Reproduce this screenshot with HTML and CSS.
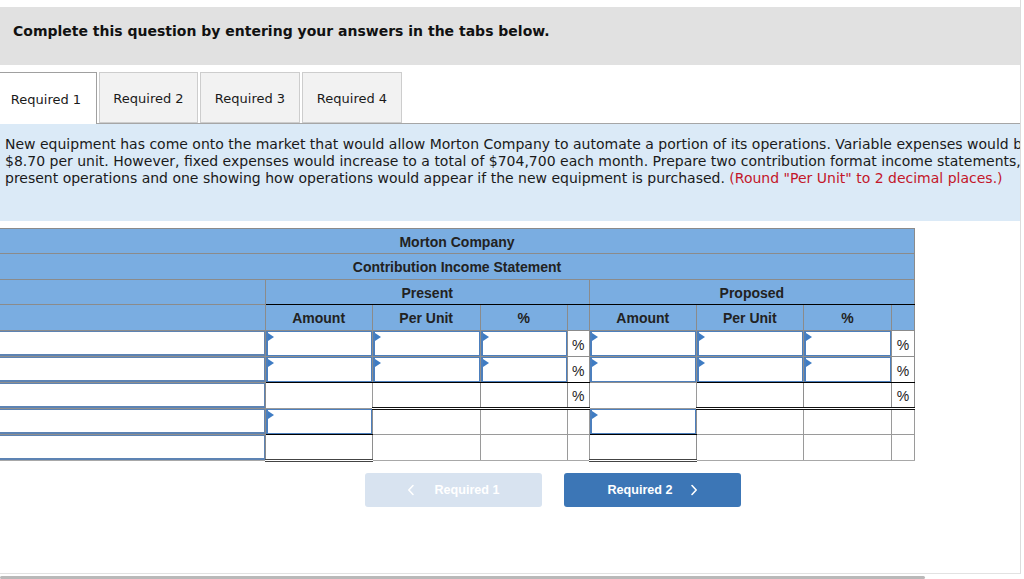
FILE: index.html
```html
<!DOCTYPE html>
<html lang="en">
<head>
<meta charset="utf-8">
<title>Required 1</title>
<link rel="stylesheet" href="styles.css">
</head>
<body>
<div class="page">
  <div class="banner">Complete this question by entering your answers in the tabs below.</div>

  <div class="tabs">
    <div class="tab active">Required 1</div>
    <div class="tab">Required 2</div>
    <div class="tab">Required 3</div>
    <div class="tab">Required 4</div>
  </div>

  <div class="prompt">
    <p>New equipment has come onto the market that would allow Morton Company to automate a portion of its operations. Variable expenses would be reduced by<br>$8.70 per unit. However, fixed expenses would increase to a total of $704,700 each month. Prepare two contribution format income statements, one showing<br>present operations and one showing how operations would appear if the new equipment is purchased. <span class="red">(Round "Per Unit" to 2 decimal places.)</span></p>
  </div>

  <table class="stmt">
    <colgroup>
      <col class="c-label"><col class="c-amt"><col class="c-pu"><col class="c-pct"><col class="c-sm">
      <col class="c-amt"><col class="c-pu2"><col class="c-pct2"><col class="c-sm2">
    </colgroup>
    <thead>
      <tr class="h1"><th colspan="9" class="title">Morton Company</th></tr>
      <tr class="h2"><th colspan="9" class="title">Contribution Income Statement</th></tr>
      <tr class="h3"><th class="lab"></th><th colspan="4" class="grp">Present</th><th colspan="4" class="grp">Proposed</th></tr>
      <tr class="h4"><th class="lab"></th><th>Amount</th><th>Per Unit</th><th>%</th><th></th><th>Amount</th><th>Per Unit</th><th>%</th><th></th></tr>
    </thead>
    <tbody>
      <tr>
        <td class="lab"><div class="lbl"></div></td>
        <td><div class="inp"></div></td><td><div class="inp"></div></td><td><div class="inp"></div></td><td class="pc">%</td>
        <td><div class="inp"></div></td><td><div class="inp"></div></td><td><div class="inp"></div></td><td class="pc">%</td>
      </tr>
      <tr class="r2">
        <td class="lab"><div class="lbl"></div></td>
        <td class="bk"><div class="inp"></div></td><td class="bk"><div class="inp"></div></td><td class="bk"><div class="inp"></div></td><td class="pc bk">%</td>
        <td><div class="inp"></div></td><td class="bk"><div class="inp"></div></td><td class="bk"><div class="inp"></div></td><td class="pc bk">%</td>
      </tr>
      <tr class="r3">
        <td class="lab"><div class="lbl"></div></td>
        <td class="plain"></td><td class="dbl"></td><td class="dbl"></td><td class="pc dbl">%</td>
        <td class="plain"></td><td class="dbl"></td><td class="dbl"></td><td class="pc dbl">%</td>
      </tr>
      <tr class="r4">
        <td class="lab"><div class="lbl"></div></td>
        <td class="bk"><div class="inp"></div></td><td class="plain"></td><td class="plain"></td><td class="plain"></td>
        <td class="bk"><div class="inp"></div></td><td class="plain"></td><td class="plain"></td><td class="plain"></td>
      </tr>
      <tr class="r5">
        <td class="lab"><div class="lbl"></div></td>
        <td class="tot"></td><td class="plain"></td><td class="plain"></td><td class="plain"></td>
        <td class="tot"></td><td class="plain"></td><td class="plain"></td><td class="plain"></td>
      </tr>
    </tbody>
  </table>

  <div class="nav">
    <button class="btn prev" type="button">
      <svg class="chev" width="8" height="12" viewBox="0 0 8 12"><path d="M6 1.5 L1.8 6 L6 10.5" fill="none" stroke="#fff" stroke-width="1.6" stroke-linecap="round" stroke-linejoin="round"/></svg>
      <span>Required 1</span>
    </button>
    <button class="btn next" type="button">
      <span>Required 2</span>
      <svg class="chev" width="8" height="12" viewBox="0 0 8 12"><path d="M2 1.5 L6.2 6 L2 10.5" fill="none" stroke="#fff" stroke-width="1.6" stroke-linecap="round" stroke-linejoin="round"/></svg>
    </button>
  </div>
</div>
<div class="hscroll"></div>
</body>
</html>
```

FILE: styles.css
```css
html, body {
  margin: 0;
  padding: 0;
  background: #ffffff;
}

.page {
  width: 1020px;
  height: 573px;
  border-right: 1px solid #dcdcdc;
  border-bottom: 1px solid #e2e2e2;
  overflow: hidden;
  font-family: "DejaVu Sans", Verdana, sans-serif;
  color: #1a1a1a;
}

.banner {
  margin-top: 7px;
  height: 58px;
  box-sizing: border-box;
  padding: 15px 13px 0;
  background: #e1e1e1;
  font-size: 14px;
  font-weight: bold;
  line-height: 18px;
  color: #111;
}

.tabs {
  margin-top: 7px;
  display: flex;
  height: 51px;
  border-bottom: 1px solid #a6a6a6;
}

.tab {
  display: flex;
  align-items: center;
  justify-content: center;
  box-sizing: border-box;
  height: 51px;
  width: 100px;
  margin-left: 2px;
  padding-top: 1px;
  background: #f2f2f2;
  border: 1px solid #cdcdcd;
  font-size: 13px;
  color: #1a1a1a;
}

.tab.active {
  width: 97px;
  height: 52px;
  margin-left: 0;
  margin-bottom: -1px;
  padding-right: 4px;
  background: #ffffff;
  border: 1px solid #a0a0a0;
  border-left: none;
  border-bottom: none;
}

.tab.active + .tab {
  width: 99px;
}

.prompt {
  height: 97px;
  box-sizing: border-box;
  padding: 12px 5px 0;
  background: #dbeaf7;
  overflow: hidden;
  white-space: nowrap;
}

.prompt p {
  margin: 0;
  font-size: 14px;
  line-height: 17px;
  color: #1a1a1a;
}

.red {
  color: #c3162a;
}

/* statement table */
.stmt {
  margin-top: 7px;
  width: 915px;
  border-collapse: collapse;
  table-layout: fixed;
  border-top: 1px solid #c8c8c8;
  font-family: "Liberation Sans", Arial, sans-serif;
  font-size: 14px;
  color: #222;
}

.c-label { width: 265px; }
.c-amt { width: 107px; }
.c-pu { width: 108px; }
.c-pct { width: 87px; }
.c-sm { width: 22px; }
.c-pu2 { width: 107px; }
.c-pct2 { width: 88px; }
.c-sm2 { width: 23px; }

.stmt th {
  background: #7aade1;
  border: 1px solid #8b8b8b;
  font-weight: bold;
  padding: 1px 0 0;
  text-align: center;
  color: #222;
}

.stmt th:first-child,
.stmt td:first-child {
  border-left: none;
}

.stmt .h1, .stmt .h3 { height: 25px; }
.stmt .h2, .stmt .h4 { height: 26px; }

.stmt th.grp {
  border-bottom: 1px solid #000;
}

.stmt tbody tr {
  height: 26px;
}

.stmt td {
  padding: 0;
  border: 1px solid #8e8e8e;
  background: #fff;
  vertical-align: middle;
}

.stmt td.lab {
  border-right: 1px solid #8a8a8a;
}

.lbl {
  height: 25px;
  box-sizing: border-box;
  border: 1px solid #5d83b3;
  border-bottom-width: 2px;
  border-left: none;
  background: #fff;
}

.inp {
  position: relative;
  height: 25px;
  box-sizing: border-box;
  border: 1px solid #4c7fbd;
  border-left-width: 2px;
  background: #fff;
}

.inp::before {
  content: "";
  position: absolute;
  top: 1px;
  left: 0;
  border-left: 6px solid #3f7cc3;
  border-top: 4px solid transparent;
  border-bottom: 4px solid transparent;
}

.stmt td.pc {
  text-align: center;
  font-size: 14px;
  padding-top: 2px;
  color: #222;
}

.stmt td.bk {
  border-bottom: 1px solid #000;
}

.stmt td.plain {
  border-color: #9a9a9a;
}

.stmt td.dbl {
  border-bottom: 3px double #111;
}

.stmt td.tot {
  border-bottom: 3px double #444;
}

.stmt tbody tr:last-child td {
  border-bottom-color: #a8a8a8;
}

.stmt tbody tr:last-child td.tot {
  border-bottom: 3px double #444;
}

/* nav buttons */
.nav {
  margin-top: 11px;
  display: flex;
  gap: 22px;
  padding-left: 365px;
}

.btn {
  width: 177px;
  height: 34px;
  border: none;
  border-radius: 3px;
  display: flex;
  align-items: center;
  justify-content: center;
  gap: 17px;
  font-family: "Liberation Sans", Arial, sans-serif;
  font-size: 12.6px;
  font-weight: bold;
  color: #fff;
  padding: 0;
}

.btn.prev {
  background: #d8e3f0;
  gap: 19px;
}

.btn.next {
  background: #3c76b6;
}

.chev {
  display: block;
}

.hscroll {
  margin-top: 2px;
  width: 925px;
  height: 3px;
  border-radius: 2px;
  background: #b9b9b9;
}
```
